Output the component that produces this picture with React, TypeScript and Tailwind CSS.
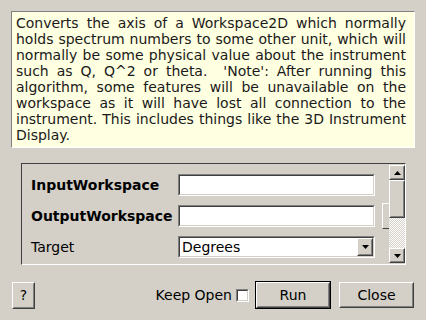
const font = { fontFamily: '"DejaVu Sans", Verdana, sans-serif' }

function Sunken({ className = '', children }: { className?: string; children?: React.ReactNode }) {
  return (
    <div className={`shrink-0 border border-t-[#808080] border-l-[#808080] border-b-white border-r-white ${className}`}>
      <div className="h-full w-full border border-t-[#404040] border-l-[#404040] border-b-[#d4d0c8] border-r-[#d4d0c8] bg-white">
        {children}
      </div>
    </div>
  )
}

function Raised({ className = '', children }: { className?: string; children?: React.ReactNode }) {
  return (
    <div className={`shrink-0 border border-t-white border-l-white border-b-[#404040] border-r-[#404040] bg-[#d4d0c8] ${className}`}>
      <div className="flex h-full w-full items-center justify-center border border-t-[#d4d0c8] border-l-[#d4d0c8] border-b-[#808080] border-r-[#808080]">
        {children}
      </div>
    </div>
  )
}

function Arrow({ up }: { up?: boolean }) {
  return (
    <svg width="7" height="4" viewBox="0 0 7 4">
      <polygon points={up ? '3.5,0 7,4 0,4' : '0,0 7,0 3.5,4'} fill="#000" />
    </svg>
  )
}

export default function App() {
  return (
    <div
      className="h-[320px] w-[426px] overflow-hidden bg-[#d4d0c8] text-[14px] text-black"
      style={font}
    >
      <div className="px-[11px] pt-[11px]">
        <div className="h-[137px] border border-t-[#808080] border-l-[#808080] border-b-white border-r-white bg-[#ffffe1] pl-[4px] pr-[8px] pt-[3px] text-justify leading-[16px] text-[#1a1a1a]">
          Converts the axis of a Workspace2D which normally holds spectrum numbers to some other unit, which will
          normally be some physical value about the instrument such as Q, Q^2 or theta.&nbsp; 'Note': After running
          this algorithm, some features will be unavailable on the workspace as it will have lost all connection to
          the instrument. This includes things like the 3D Instrument Display.
        </div>
      </div>

      <div className="ml-[21px] mt-[15px] flex h-[102px] w-[385px] border border-t-[#404040] border-l-[#404040] border-b-white border-r-white">
        <div className="flex flex-1 flex-col gap-[9px] overflow-hidden pl-[9px] pt-[10px]">
          <div className="flex h-[22px] items-center">
            <span className="w-[147px] shrink-0 font-bold">InputWorkspace</span>
            <Sunken className="h-[22px] w-[197px]" />
          </div>
          <div className="flex h-[22px] items-center">
            <span className="w-[147px] shrink-0 font-bold">OutputWorkspace</span>
            <Sunken className="h-[22px] w-[197px]" />
            <div className="ml-[7px] mt-[-2px] h-[26px] w-[20px] shrink-0 self-start border-l border-t border-b border-l-white border-t-white border-b-[#404040]" />
          </div>
          <div className="flex h-[22px] items-center">
            <span className="w-[147px] shrink-0">Target</span>
            <Sunken className="h-[22px] w-[197px]">
              <div className="flex h-full items-center pl-[2px]">
                <span className="flex-1">Degrees</span>
                <Raised className="h-[18px] w-[16px]">
                  <Arrow />
                </Raised>
              </div>
            </Sunken>
          </div>
        </div>
        <div className="flex w-[16px] flex-col pt-[1px] pb-[1px]">
          <Raised className="h-[15px]">
            <Arrow up />
          </Raised>
          <Raised className="h-[38px]" />
          <div className="flex-1 bg-[repeating-conic-gradient(#ffffff_0_25%,#d4d0c8_0_50%)] bg-[length:2px_2px]" />
          <Raised className="h-[15px]">
            <Arrow />
          </Raised>
        </div>
      </div>

      <div className="mt-[16px] flex items-center pl-[12px] pr-[12px]">
        <Raised className="h-[27px] w-[23px]">?</Raised>
        <span className="ml-auto">Keep Open</span>
        <Sunken className="ml-[4px] h-[13px] w-[13px]" />
        <div className="ml-[6px] border border-black">
          <Raised className="h-[26px] w-[74px]">Run</Raised>
        </div>
        <Raised className="ml-[8px] h-[26px] w-[75px]">Close</Raised>
      </div>
    </div>
  )
}
